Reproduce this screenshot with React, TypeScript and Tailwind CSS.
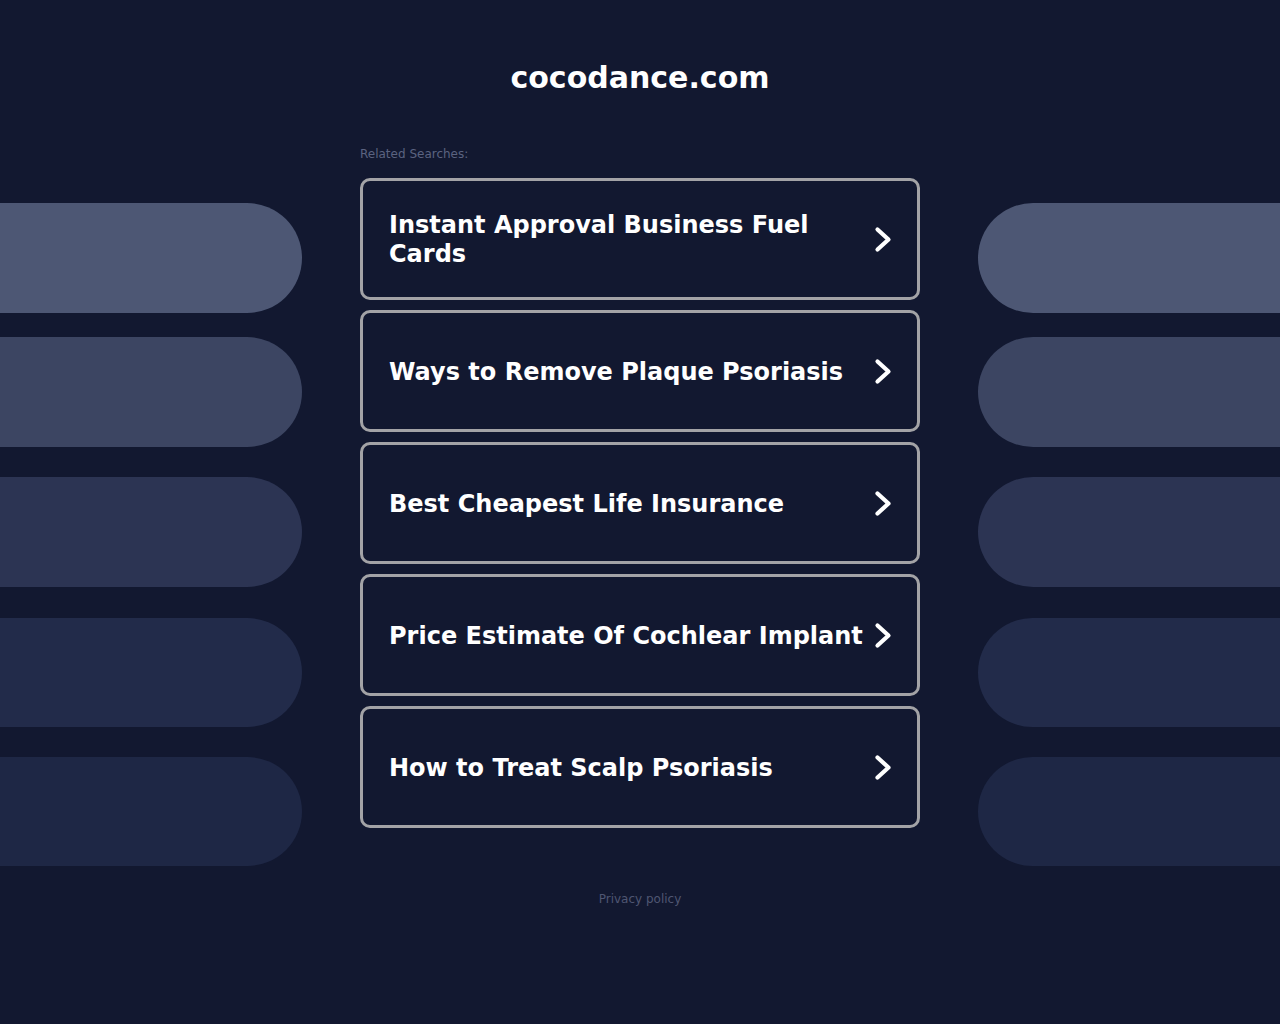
const searches = [
  "Instant Approval Business Fuel Cards",
  "Ways to Remove Plaque Psoriasis",
  "Best Cheapest Life Insurance",
  "Price Estimate Of Cochlear Implant",
  "How to Treat Scalp Psoriasis",
];

const Pills = ({ side }: { side: "left" | "right" }) => {
  const round = side === "left" ? "rounded-r-[55px]" : "rounded-l-[55px]";
  return (
    <div className="flex flex-col pt-[203px]">
      <div className={`h-[110px] bg-[#4d5774] ${round}`} />
      <div className={`mt-[24px] h-[110px] bg-[#3c4562] ${round}`} />
      <div className={`mt-[30px] h-[110px] bg-[#2c3453] ${round}`} />
      <div className={`mt-[31px] h-[109px] bg-[#222b4a] ${round}`} />
      <div className={`mt-[30px] h-[109px] bg-[#1e2745] ${round}`} />
    </div>
  );
};

const Chevron = () => (
  <svg width="18" height="27" viewBox="0 0 18 27" className="shrink-0 -mt-[2px]">
    <polyline
      points="3.5,3.5 14.5,13.5 3.5,23.5"
      fill="none"
      stroke="white"
      strokeWidth="4.2"
      strokeLinecap="round"
      strokeLinejoin="round"
    />
  </svg>
);

const App = () => {
  return (
    <div
      className="min-h-[1024px] bg-[#121830] text-white"
      style={{ fontFamily: '"DejaVu Sans", sans-serif' }}
    >
      <div className="grid grid-cols-[302px_1fr_302px] gap-[58px]">
        <Pills side="left" />
        <div className="flex flex-col">
          <h1 className="mt-[59px] text-center text-[30px] font-bold leading-[38px]">
            cocodance.com
          </h1>
          <div className="mt-[49px] text-[12px] leading-[16px] text-[#5b6380]">
            Related Searches:
          </div>
          <div className="mt-[16px] flex flex-col gap-[10px]">
            {searches.map((s) => (
              <a
                key={s}
                href="#"
                className="flex h-[122px] items-center justify-between gap-2 rounded-[10px] border-[3px] border-[#a3a3a6] pl-[26px] pr-[25px] pt-[2px]"
              >
                <span className="text-[24px] font-bold leading-[29px]">{s}</span>
                <Chevron />
              </a>
            ))}
          </div>
          <div className="mt-[62px] text-center text-[12px] text-[#4f5672]">
            Privacy policy
          </div>
        </div>
        <Pills side="right" />
      </div>
    </div>
  );
};

export default App;
